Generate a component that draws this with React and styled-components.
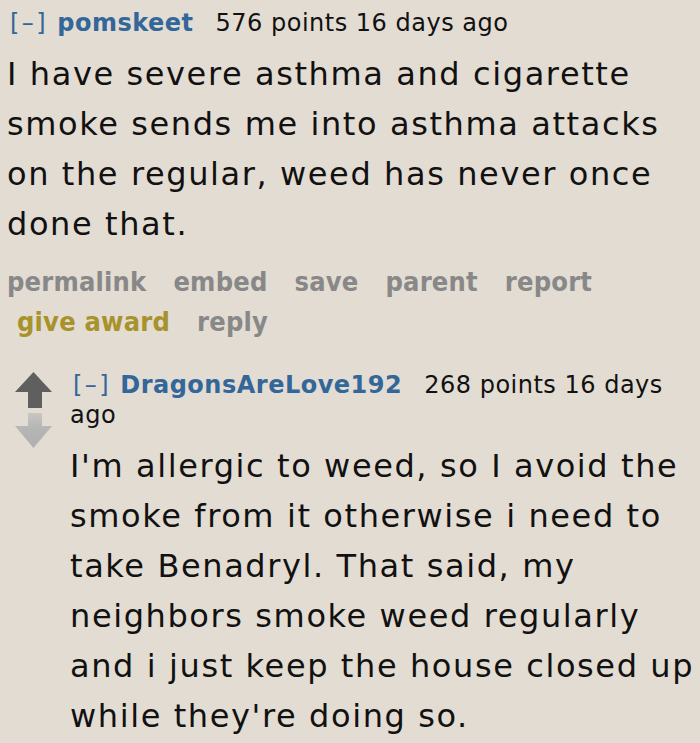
import React from 'react'
import styled, { createGlobalStyle } from 'styled-components'

const Global = createGlobalStyle`
  html, body {
    margin: 0;
    padding: 0;
    background: #e3dcd2;
  }
  body {
    font-family: "DejaVu Sans", Verdana, sans-serif;
    color: #111;
    overflow: hidden;
  }
`

const Page = styled.div`
  width: 700px;
  height: 743px;
  overflow: hidden;
  padding: 8px 0 0 7px;
  box-sizing: border-box;
`

const Entry = styled.div`
  flex: 1;
  min-width: 0;
`

const Tagline = styled.div`
  font-size: 24px;
  line-height: 30px;
  letter-spacing: 0.5px;
  color: #111;
`

const Expand = styled.span`
  color: #369;
  letter-spacing: 2.5px;
  margin: 0 9px 0 3px;
`

const Author = styled.span`
  color: #369;
  font-weight: bold;
  margin-right: 22px;
`

const Body = styled.div`
  font-size: 32px;
  line-height: 50px;
  letter-spacing: 1.6px;
  margin: 11px 0 13px;
`

const Buttons = styled.ul`
  list-style: none;
  margin: 0;
  padding: 0;
  display: flex;
  flex-wrap: wrap;
  column-gap: 27px;
  width: 620px;
`

const Button = styled.li`
  font-size: 27px;
  line-height: 40px;
  font-weight: bold;
  letter-spacing: 0.2px;
  font-family: "DejaVu Sans Condensed", "DejaVu Sans", sans-serif;
  color: ${p => (p.$gold ? '#a8922c' : '#888')};
  margin-left: ${p => (p.$indent ? '10px' : '0')};
`

const Child = styled.div`
  display: flex;
  gap: 18px;
  margin: 28px 0 0 8px;
`

const Votes = styled.div`
  display: flex;
  flex-direction: column;
  gap: 5px;
  padding-top: 2px;
  width: 37px;
  flex: none;
`

const ArrowUp = () => (
  <svg width="37" height="36" viewBox="0 0 37 36">
    <path d="M18.5 0 L37 20 L27 20 L27 36 L13 36 L13 20 L0 20 Z" fill="#5f5f5f" />
  </svg>
)

const ArrowDown = () => (
  <svg width="37" height="35" viewBox="0 0 37 35">
    <defs>
      <linearGradient id="fade" x1="0" y1="0" x2="0" y2="1">
        <stop offset="0" stopColor="#c9c6c1" />
        <stop offset="0.45" stopColor="#b5b5b5" />
        <stop offset="1" stopColor="#b0b0b0" />
      </linearGradient>
    </defs>
    <path d="M18.5 35 L37 13 L27 13 L27 0 L13 0 L13 13 L0 13 Z" fill="url(#fade)" />
  </svg>
)

export default function App() {
  return (
    <Page>
      <Global />
      <Entry>
        <Tagline>
          <Expand>[–]</Expand>
          <Author>pomskeet</Author>
          576 points 16 days ago
        </Tagline>
        <Body>
          I have severe asthma and cigarette smoke sends me into asthma attacks on the regular, weed has never once done that.
        </Body>
        <Buttons>
          <Button>permalink</Button>
          <Button>embed</Button>
          <Button>save</Button>
          <Button>parent</Button>
          <Button>report</Button>
          <Button $gold $indent>give award</Button>
          <Button>reply</Button>
        </Buttons>
      </Entry>
      <Child>
        <Votes>
          <ArrowUp />
          <ArrowDown />
        </Votes>
        <Entry>
          <Tagline>
            <Expand>[–]</Expand>
            <Author>DragonsAreLove192</Author>
            268 points 16 days ago
          </Tagline>
          <Body>
            I'm allergic to weed, so I avoid the smoke from it otherwise i need to take Benadryl. That said, my neighbors smoke weed regularly and i just keep the house closed up while they're doing so.
          </Body>
        </Entry>
      </Child>
    </Page>
  )
}
